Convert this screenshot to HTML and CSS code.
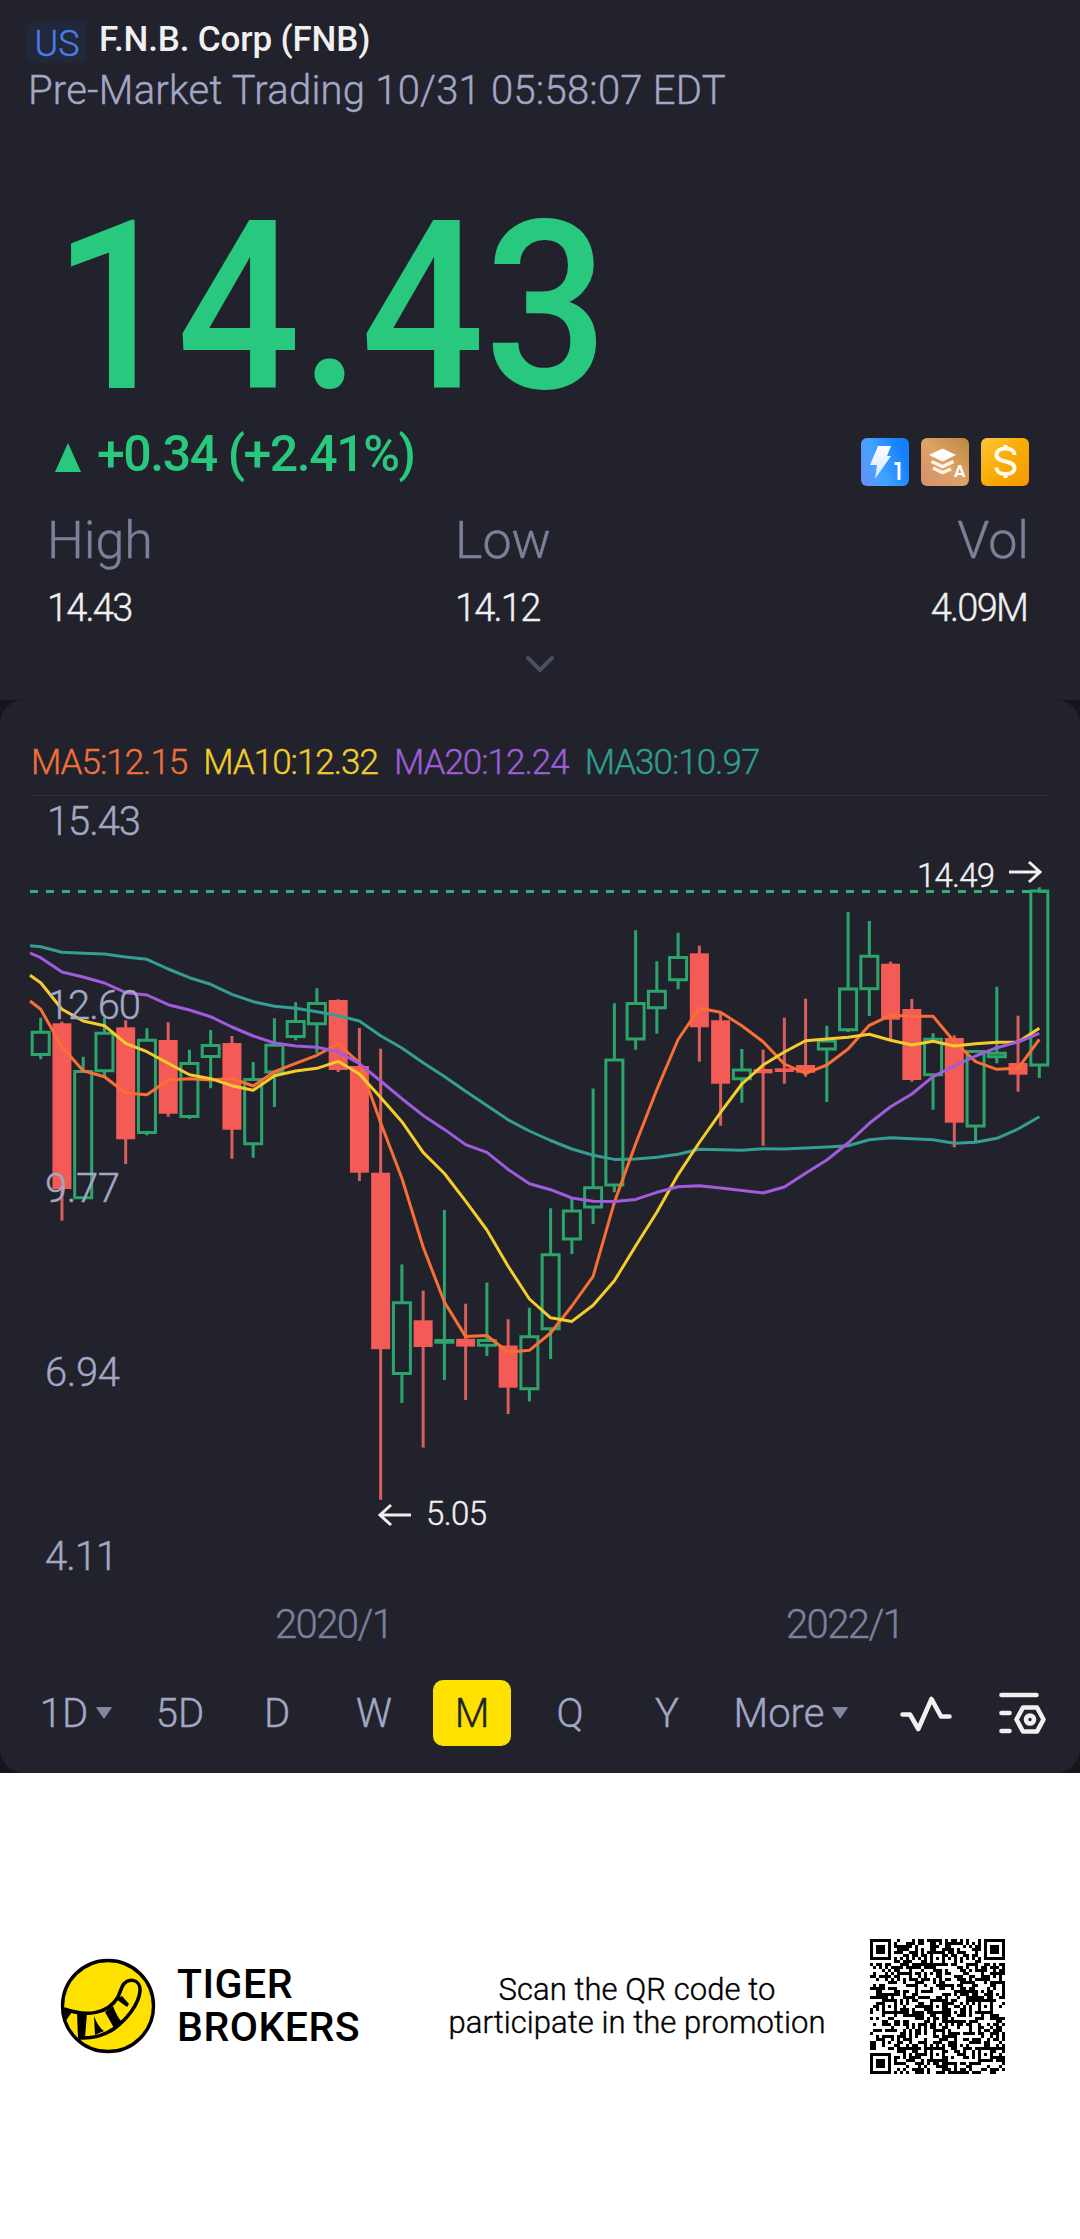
FILE: index.html
```html
<!DOCTYPE html>
<html lang="en">

<head>
	<meta charset="utf-8">
	<title>F.N.B. Corp (FNB)</title>
	<link rel="stylesheet" href="styles.css">
</head>

<body>
	<header class="quote">
		<div class="name-row">
			<span class="market">US</span>
			<h1 class="name">F.N.B. Corp (FNB)</h1>
		</div>
		<p class="session">Pre-Market Trading 10/31 05:58:07 EDT</p>
		<div class="price">14.43</div>
		<div class="change-row">
			<svg class="up" width="26" height="29" viewBox="0 0 26 29"><path d="M13 0 26 29H0z"/></svg>
			<span class="change">+0.34 (+2.41%)</span>
			<div class="badges">
				<svg width="48" height="48" viewBox="0 0 48 48">
					<defs>
						<linearGradient id="blue" x1="0" y1="1" x2="1" y2=".6"><stop offset="0" stop-color="#6b8cfa"/><stop offset=".45" stop-color="#43a3ff"/><stop offset="1" stop-color="#1580ff"/></linearGradient>
						<linearGradient id="bronze" x1="0" y1="1" x2="1" y2="0"><stop offset="0" stop-color="#d48f70"/><stop offset=".5" stop-color="#dda367"/><stop offset="1" stop-color="#bd863f"/></linearGradient>
						<linearGradient id="gold" x1="0" y1="0" x2="1" y2="1"><stop offset="0" stop-color="#ffc43a"/><stop offset=".5" stop-color="#f9ac06"/><stop offset="1" stop-color="#f59800"/></linearGradient>
						<linearGradient id="shine" x1="0" y1="0" x2="0" y2="1"><stop offset="0" stop-color="#fff"/><stop offset="1" stop-color="#fff" stop-opacity=".75"/></linearGradient>
					</defs>
					<rect width="48" height="48" rx="6" fill="url(#blue)"/>
					<path d="M17 8h13l-4 10h4L14 41l2-14H9z" fill="url(#shine)"/>
					<path d="M33.500 25.500H38V42" fill="none" stroke="#fff" stroke-width="3"/>
				</svg>
				<svg width="48" height="48" viewBox="0 0 48 48">
					<rect width="48" height="48" rx="6" fill="url(#bronze)"/>
					<path d="M21.500 10.500 35 17l-13.500 6.500L8 17z" fill="#fff"/>
					<path d="m10.500 23.500 11 5 11-5M12 30l9.500 4.500L30 31" fill="none" stroke="#fff3e2" stroke-width="3.500"/>
					<text x="33" y="39" class="badge-letter">A</text>
				</svg>
				<svg width="48" height="48" viewBox="0 0 48 48">
					<rect width="48" height="48" rx="6" fill="url(#gold)"/>
					<path d="M33.500 17c0-4-4-6.500-9-6.500S15.500 13 15.500 17c0 9 18 4 18 13 0 4-4 6-9 6s-9-2.500-9-6.500M24.500 7v5M24.500 35v5" fill="none" stroke="#fffbe8" stroke-width="4"/>
				</svg>
			</div>
		</div>
		<div class="stats">
			<div class="stat"><div class="stat-label">High</div><div class="stat-value">14.43</div></div>
			<div class="stat"><div class="stat-label">Low</div><div class="stat-value">14.12</div></div>
			<div class="stat last"><div class="stat-label">Vol</div><div class="stat-value">4.09M</div></div>
		</div>
		<svg class="expand" width="30" height="18" viewBox="0 0 30 18"><path d="m3 3 12 12L27 3"/></svg>
	</header>

	<main class="chart-wrap">
		<section class="chart-panel">
			<div class="averages">
				<span class="ma5">MA5:12.15</span>
				<span class="ma10">MA10:12.32</span>
				<span class="ma20">MA20:12.24</span>
				<span class="ma30">MA30:10.97</span>
			</div>
			<svg id="chart" width="1080" height="854" viewBox="0 796 1080 854">
				<path class="last-price" d="M30 891.500H1050"/>
				<g id="candles"></g>
				<g id="lines"></g>
				<g class="axis">
					<text x="47" y="835" textLength="94">15.43</text>
					<text x="47" y="1019" textLength="94">12.60</text>
					<text x="45" y="1202" textLength="75">9.77</text>
					<text x="45" y="1386" textLength="75">6.94</text>
					<text x="45" y="1570" textLength="73">4.11</text>
				</g>
				<g class="dates">
					<text x="275" y="1638" textLength="119">2020/1</text>
					<text x="786" y="1638" textLength="119">2022/1</text>
				</g>
				<g class="extreme">
					<text x="917" y="887" textLength="78">14.49</text>
					<path d="M1009 872h31m-11-10 11 10-11 10"/>
					<text x="426" y="1525" textLength="61">5.05</text>
					<path d="M411 1515h-31m11-10-11 10 11 10"/>
				</g>
			</svg>
			<nav class="periods">
				<a class="tab first">1D<svg width="16" height="12" viewBox="0 0 16 12"><path d="M2 0h12q3 0 1 2L8 12 1 2q-2-2 1-2"/></svg></a>
				<a class="tab">5D</a>
				<a class="tab">D</a>
				<a class="tab">W</a>
				<a class="tab active">M</a>
				<a class="tab">Q</a>
				<a class="tab">Y</a>
				<a class="tab more">More<svg width="16" height="12" viewBox="0 0 16 12"><path d="M2 0h12q3 0 1 2L8 12 1 2q-2-2 1-2"/></svg></a>
				<svg class="tool" width="52" height="44" viewBox="0 0 52 44"><path d="M2.500 23.500H10L18.300 38 31.500 8 41 25.500h8.500"/></svg>
				<svg class="tool" width="47" height="46" viewBox="0 0 47 46"><path d="M2.500 5H37.500M2.500 23H10.500M2.500 41H10.500M24 17.500H38L44.500 29.500 38 41.500H24L17.500 29.500z"/><circle cx="31" cy="29.500" r="4"/></svg>
			</nav>
		</section>
	</main>

	<footer class="promo">
		<svg class="logo" width="96" height="96" viewBox="0 0 96 96">
			<circle cx="48" cy="48" r="45.500" fill="#ffe100" stroke="#000" stroke-width="3.400"/>
			<path d="M4 51C27 59 48 56 58 39L62 29C66 19 81 20 80 33C79 46 67 61 55 70Q40 81 19 80" fill="none" stroke="#000" stroke-width="3.500"/>
			<path d="M3 50 12 54 5 64zM17 55H27L25 80H18zM34 58Q38 69 44 73L35 77zM45 54 53 48Q57 59 62 64L54 70zM56 41 62 38 69 46 67 49z"/>
		</svg>
		<div class="brand">TIGER<br>BROKERS</div>
		<p class="scan">Scan the QR code to<br>participate in the promotion</p>
		<svg id="qr" width="135" height="135" viewBox="0 0 45 45"></svg>
	</footer>

	<script src="chart.js"></script>
</body>

</html>
```

FILE: styles.css
```css
body {
	margin: 0;
	background-color: #fff;
	font-family: Roboto, "Open Sans", sans-serif;
}
h1, p {
	margin: 0;
}
svg {
	display: block;
	flex: none;
}
/* light is a bit too thin on the dark background */
.market, .session, .stat-label, .stat-value, .averages, .axis, .dates, .extreme text, .tab, .scan {
	font-weight: 300;
	-webkit-text-stroke: 0.4px;
}
.quote {
	box-sizing: border-box;
	height: 700px;
	padding: 21px 51px 0 27px;
	background-color: #21222b;
}
.name-row {
	display: flex;
	gap: 12px;
	height: 42px;
}
.market {
	width: 60px;
	line-height: 46px;
	text-align: center;
	background-color: #21283a;
	border-radius: 6px;
	color: #4a7ee6;
	font-size: 36px;
}
.name {
	color: #f0f0f0;
	font-size: 35px;
	font-weight: 500;
	line-height: 37px;
	letter-spacing: -0.15px;
}
.session {
	margin: 2px 0 0 1px;
	color: #a3a7c5;
	font-size: 40px;
	line-height: 51px;
	letter-spacing: 0.23px;
}
.price {
	margin: 92px 0 0 26px;
	color: #28c97e;
	font-size: 235px;
	font-weight: 500;
	line-height: 200px;
	transform: scaleX(0.926);
	transform-origin: left;
}
.change-row {
	display: flex;
	height: 48px;
	margin: 30px 0 0 28px;
}
.up {
	margin: 5px 16px 0 0;
	fill: #28c97e;
}
.change {
	color: #28c97e;
	font-size: 50px;
	font-weight: 500;
	line-height: 33px;
	letter-spacing: -1.45px;
}
.badges {
	display: flex;
	gap: 12px;
	margin-left: auto;
}
.badge-letter {
	fill: #fff;
	font-size: 17px;
	font-weight: 700;
}
.stats {
	display: grid;
	grid-template-columns: 408px 1fr auto;
	margin: 27px 0 0 20px;
}
.last {
	text-align: right;
}
.stat-label {
	color: #7c809b;
	font-size: 52px;
	line-height: 56px;
}
.stat-value {
	margin-top: 19px;
	padding-right: 2px;
	color: #f0f0f0;
	font-size: 38px;
	line-height: 40px;
	letter-spacing: -1.8px;
}
.expand {
	margin: 27px 0 0 498px;
	fill: none;
	stroke: #4e5062;
	stroke-width: 4;
	stroke-linecap: round;
}
.chart-wrap {
	background-color: #15151e;
}
.chart-panel {
	height: 1073px;
	background-color: #21222b;
	border-radius: 24px;
}
.averages {
	display: flex;
	gap: 16px;
	box-sizing: border-box;
	height: 96px;
	margin: 0 30px;
	padding: 41px 0 0 1px;
	border-bottom: 1px solid #30313c;
	font-size: 35px;
	line-height: 44px;
	letter-spacing: -1px;
}
.ma5 {
	color: #f0713c;
}
.ma10 {
	color: #f0cd30;
}
.ma20 {
	color: #9c5fd6;
}
.ma30 {
	color: #2f9d8f;
}
.last-price {
	stroke: #2fb275;
	stroke-width: 3;
	stroke-dasharray: 8;
}
.up-candle {
	fill: none;
	stroke: #2ca56d;
	stroke-width: 3;
}
.down-candle {
	fill: #f45b57;
}
.down-wick {
	stroke: #d95f5f;
	stroke-width: 3;
}
.line {
	fill: none;
	stroke-width: 3;
	stroke-linejoin: round;
}
.line.ma5 {
	stroke: #fa6e36;
}
.line.ma10 {
	stroke: #f6cb2c;
}
.line.ma20 {
	stroke: #a05cdc;
}
.line.ma30 {
	stroke: #359d91;
}
.axis {
	fill: #a3a7c5;
	stroke: #a3a7c5;
	font-size: 40px;
}
.dates {
	fill: #7c809b;
	stroke: #7c809b;
	font-size: 40px;
}
.axis, .dates, .extreme text {
	stroke-width: 0.4;
}
.extreme {
	fill: #f0f0f0;
	stroke: #f0f0f0;
	font-size: 33px;
}
.extreme path {
	fill: none;
	stroke-width: 3;
}
.periods {
	display: grid;
	grid-template-columns: 97px 97px 97px 98px 98px 97px 97px 175px 99px auto;
	align-items: center;
	height: 66px;
	padding: 30px 0 0 44px;
}
.tab {
	display: flex;
	align-items: center;
	justify-content: center;
	gap: 8px;
	width: 78px;
	height: 66px;
	color: #a3a7c5;
	font-size: 40px;
}
.tab svg {
	fill: #82869f;
}
.tab.first {
	margin-left: -7px;
}
.tab.more {
	width: 132px;
}
.tab.active {
	background-color: #ffe100;
	border-radius: 10px;
	color: #21222b;
}
.tool {
	fill: none;
	stroke: #f0f0f0;
	stroke-width: 4.6;
	stroke-linecap: round;
	stroke-linejoin: round;
}
.promo {
	display: flex;
	align-items: center;
	box-sizing: border-box;
	height: 466px;
	padding: 0 75px 0 60px;
}
.brand {
	width: 271px;
	margin-left: 21px;
	font-size: 41px;
	font-weight: 500;
	line-height: 43px;
	letter-spacing: 0.5px;
}
.scan {
	width: 378px;
	font-size: 31px;
	line-height: 33px;
	letter-spacing: 0.06px;
	text-align: center;
	white-space: nowrap;
}
#qr {
	margin-left: auto;
}
```

FILE: chart.js
```js
const svgNS = "http://www.w3.org/2000/svg";
const add = (parent, name, attrs) => {
	const el = document.createElementNS(svgNS, name);
	for (const key in attrs) {
		el.setAttribute(key, attrs[key]);
	}
	parent.appendChild(el);
};
const centre = i => 40.7 + i * 21.247;

// up?, high, body top, body bottom, low
const candles = [
	[1, 1017.7, 1031, 1055.7, 1059.3], [0, 1021.7, 1023.3, 1189, 1220.7], [1, 1056.7, 1070.3, 1199, 1199],
	[1, 1017.7, 1032, 1072, 1076.7], [0, 1020.3, 1027.3, 1139.3, 1164], [1, 1028.3, 1039, 1133.7, 1135.3],
	[0, 1022.3, 1040, 1113.7, 1116.7], [1, 1049.7, 1062.3, 1117.7, 1119], [1, 1030, 1044.3, 1057.7, 1088.3],
	[0, 1036, 1043, 1129.7, 1158.7], [1, 1062, 1078.3, 1145, 1157.7], [1, 1018.3, 1044, 1073.3, 1107],
	[1, 1002.3, 1020.3, 1037.7, 1040.3], [1, 988.3, 1002.3, 1025, 1053.3], [0, 999.3, 1000, 1070, 1072],
	[0, 1028, 1066, 1172.7, 1181], [0, 1048.8, 1172.7, 1349.2, 1499.8], [1, 1264.5, 1301.5, 1374.7, 1403],
	[0, 1290.7, 1320.3, 1347, 1447.6], [1, 1210, 1339.2, 1343.6, 1380], [0, 1303.7, 1338.8, 1346.6, 1400],
	[1, 1282.6, 1339.2, 1346.6, 1356], [0, 1319.2, 1345.5, 1387.7, 1414], [1, 1307.8, 1335.5, 1390, 1401.4],
	[1, 1208.2, 1253.4, 1330, 1359], [1, 1198.6, 1209.7, 1240.4, 1254], [1, 1088.4, 1186.4, 1208.2, 1224],
	[1, 1003.3, 1058.7, 1186.4, 1192.3], [1, 930.3, 1002.3, 1040.3, 1049.7], [1, 961.3, 990, 1009, 1033.7],
	[1, 932.7, 956.3, 981, 989.3], [0, 945.7, 953.3, 1027.3, 1061.7], [0, 1012.7, 1020.3, 1083.7, 1125.7],
	[1, 1049, 1068.7, 1080, 1102.7], [0, 1049.7, 1069, 1073.3, 1145.7], [0, 1017.7, 1068.3, 1072, 1083.7],
	[0, 998.7, 1065, 1072.7, 1076.7], [1, 1025.7, 1039.7, 1050.3, 1102], [1, 912, 987.7, 1031, 1032],
	[1, 921, 955, 990, 1016], [0, 961.7, 963.7, 1019.7, 1039.3], [0, 999, 1009, 1080, 1081.7],
	[1, 1033.3, 1038, 1076, 1109.7], [0, 1035.3, 1038, 1122.7, 1147.3], [1, 1050, 1050.3, 1127.3, 1143],
	[1, 986.7, 1052, 1058, 1063.3], [0, 1015.7, 1063, 1074.7, 1091.7], [1, 887.3, 889.7, 1066.3, 1078]
];
const candleGroup = document.getElementById("candles");
candles.forEach(([up, high, top, bottom, low], i) => {
	const x = centre(i);
	if (up) {
		add(candleGroup, "path", {
			class: "up-candle",
			d: `M${x} ${high}V${top}M${x} ${bottom}V${low}M${x - 8.5} ${top + 1.3}H${x + 8.5}V${bottom - 1.3}H${x - 8.5}Z`
		});
	} else {
		add(candleGroup, "path", { class: "down-wick", d: `M${x} ${high}V${low}` });
		add(candleGroup, "rect", { class: "down-candle", x: x - 9.5, y: top, width: 19, height: bottom - top });
	}
});

// the first value of each average is where it enters at the left edge
const averages = {
	ma30: [945.7, 946.7, 952.3, 953.3, 954, 957, 959.3, 969, 977.7, 984.3, 994.3, 1001.7, 1006.3, 1008.3, 1011.7, 1015.7, 1021, 1035.8, 1048, 1062.8, 1076.5, 1091.3, 1105.4, 1119.8, 1131, 1140.5, 1149, 1155.3, 1159.4, 1159, 1157.2, 1154.2, 1149.3, 1149.7, 1150.3, 1148.7, 1149, 1148, 1147, 1145.7, 1139.7, 1137.7, 1138.7, 1139.7, 1143.3, 1142.3, 1138.3, 1129, 1116.7],
	ma5: [1001, 1009.3, 1046.7, 1070.7, 1076.7, 1093, 1094.7, 1080, 1078.7, 1080, 1078.3, 1086, 1071.7, 1063.3, 1055.3, 1043.7, 1063, 1122.8, 1178.3, 1247, 1302, 1336.6, 1335.5, 1352.2, 1350.3, 1333, 1306, 1276.3, 1202.3, 1144, 1089.5, 1039.5, 1008.3, 1012.3, 1025.7, 1041.7, 1064, 1073.3, 1065, 1049, 1025.3, 1015.3, 1016.3, 1016.3, 1041.7, 1061.7, 1069.3, 1068.3, 1039.3],
	ma10: [975.3, 982.7, 1009.3, 1021, 1025.7, 1043.3, 1051.7, 1063.3, 1074.7, 1078.7, 1085.7, 1090.3, 1075.7, 1071, 1068.3, 1061.3, 1074, 1097.6, 1121.7, 1152.4, 1173.5, 1201.2, 1230, 1266.3, 1299, 1317.8, 1321.4, 1305.2, 1280.8, 1246, 1212.3, 1174.6, 1142.5, 1112.3, 1084, 1065, 1052, 1040.7, 1039, 1037.3, 1034.3, 1040.3, 1045, 1041.3, 1046, 1043.7, 1042.3, 1042, 1028.3],
	ma20: [953, 957.7, 972, 977, 983, 992.7, 995, 1004.7, 1010, 1016.7, 1027, 1036, 1043, 1046, 1047.3, 1051.7, 1063.6, 1081, 1098.7, 1115.4, 1129.4, 1144.6, 1152.4, 1169.4, 1183.8, 1189.7, 1198, 1201.2, 1201.6, 1199.4, 1192.3, 1186.8, 1185.7, 1188, 1190.5, 1193, 1187, 1173.3, 1160, 1143, 1123.3, 1106.7, 1094, 1076.7, 1066, 1056, 1047.7, 1042, 1033.3]
};
for (const name in averages) {
	const points = averages[name].map((y, i) => `${i ? centre(i - 1) : 30},${y}`).join(" ");
	add(document.getElementById("lines"), "polyline", { class: "line " + name, points });
}

// QR code: finders, alignment marks, timing rows and data cells
const size = 45;
const square = (x, y, cx, cy) => Math.max(Math.abs(x - cx), Math.abs(y - cy));
let seed = 1973;
const bit = () => {
	seed = (seed * 1103515245 + 12345) % 2147483648;
	return seed / 2147483648 < 0.5;
};
const isDark = (x, y) => {
	const data = bit();
	for (const [cx, cy] of [[3, 3], [41, 3], [3, 41]]) {
		const r = square(x, y, cx, cy);
		if (r <= 4) return r < 2 || r == 3;
	}
	for (const [cx, cy] of [[22, 6], [6, 22], [22, 22], [38, 22], [22, 38], [38, 38]]) {
		const r = square(x, y, cx, cy);
		if (r <= 2) return r != 1;
	}
	if (x == 6 || y == 6) return (x + y) % 2 == 0;
	return data;
};
let cells = "";
for (let y = 0; y < size; y++) {
	for (let x = 0; x < size; x++) {
		if (isDark(x, y)) cells += `M${x} ${y}h1v1h-1z`;
	}
}
add(document.getElementById("qr"), "path", { d: cells, "shape-rendering": "crispEdges" });
```
